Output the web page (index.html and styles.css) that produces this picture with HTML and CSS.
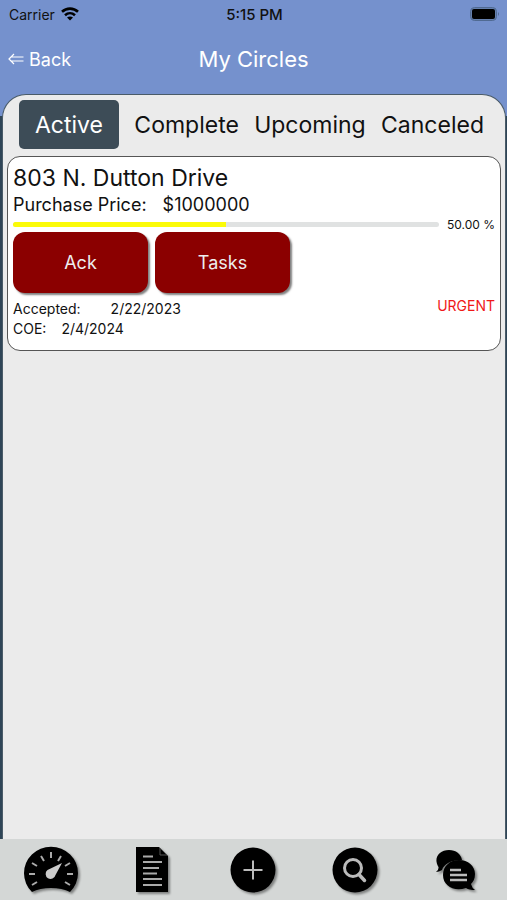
FILE: index.html
```html
<!DOCTYPE html>
<html lang="en">
<head>
    <meta charset="UTF-8">
    <meta name="viewport" content="width=device-width, initial-scale=1.0">
    <title>My Circles</title>
    <link rel="stylesheet" href="styles.css">
</head>
<body>
    <header>
        <div class="status">
            <div class="carrier">
                <span>Carrier</span>
                <svg width="18" height="14" viewBox="0 0 18 14" fill="none" stroke="#000" stroke-width="2.6">
                    <path d="M1 4.8C5.5 .6 12.5 .6 17 4.8"/>
                    <path d="M4 8.2c3-2.7 7-2.7 10 0"/>
                    <path d="M9 13.4L6 10.6c1.8-1.5 4.2-1.5 6 0z" fill="#000" stroke="none"/>
                </svg>
            </div>
            <strong>5:15 PM</strong>
            <div class="battery">
                <svg width="30" height="14" viewBox="0 0 30 14">
                    <rect x=".5" y=".5" width="26" height="13" rx="4" fill="#6580ae" stroke="#506a92"/>
                    <rect x="2" y="2" width="23" height="10" rx="2" fill="#000"/>
                    <path d="M28 5q2 2 0 4z" fill="#506a92"/>
                </svg>
            </div>
        </div>
        <nav class="titlebar">
            <a class="back" href="#">
                <svg width="16" height="12" viewBox="0 0 16 12" fill="none" stroke="#fff" stroke-width="1.2">
                    <path d="M6 1L1 6l5 5M3.500 4H15.500M3.500 8H15.500"/>
                </svg>
                Back
            </a>
            <h1>My Circles</h1>
        </nav>
    </header>

    <main>
        <div class="tabs">
            <button class="tab active">Active</button>
            <button class="tab">Complete</button>
            <button class="tab">Upcoming</button>
            <button class="tab">Canceled</button>
        </div>
        <section class="card">
            <h2>803 N. Dutton Drive</h2>
            <p class="price"><span>Purchase Price:</span><span>$1000000</span></p>
            <div class="progress">
                <div class="track"><div class="bar" style="width: 50%"></div></div>
                <span>50.00 %</span>
            </div>
            <div class="actions">
                <button class="action">Ack</button>
                <button class="action">Tasks</button>
            </div>
            <div class="details">
                <div>
                    <p class="accepted"><span>Accepted:</span><span>2/22/2023</span></p>
                    <p class="coe"><span>COE:</span><span>2/4/2024</span></p>
                </div>
                <span class="urgent">URGENT</span>
            </div>
        </section>
    </main>

    <footer>
        <a href="#" aria-label="Dashboard">
            <svg width="54" height="46" viewBox="0 0 54 46">
                <path d="M8 45A27 26.500 0 1 1 46 45C36 39.500 18 39.500 8 45z"/>
                <path d="M5 27h6M43 27h6M8 38l5-3M46 38l-5-3M8 16l5 3M46 16l-5 3M17 9l3 5M37 9l-3 5M27 5v6" stroke="#aaa" stroke-width="2"/>
                <path d="M38 16L31.500 28a5 5 0 1 1-8-5z" fill="#ccc"/>
            </svg>
        </a>
        <a href="#" aria-label="Documents">
            <svg width="34" height="46" viewBox="0 0 34 46">
                <path d="M1 0H24L33 9V45H1z"/>
                <path d="M25 1v7h7" fill="none" stroke="#555"/>
                <path d="M8 9.500h10M8 15h19M8 21h16M8 26.500h14M8 32h19M8 38h19" stroke="#aaa" stroke-width="2"/>
            </svg>
        </a>
        <a href="#" aria-label="Add">
            <svg width="46" height="46" viewBox="0 0 46 46">
                <circle cx="23" cy="23" r="22.500"/>
                <path d="M13.500 23h19M23 13.500v19" stroke="#bbb" stroke-width="2"/>
            </svg>
        </a>
        <a href="#" aria-label="Search">
            <svg width="46" height="46" viewBox="0 0 46 46">
                <circle cx="23" cy="23" r="22.500"/>
                <circle cx="21" cy="21" r="8.500" fill="none" stroke="#bbb" stroke-width="3"/>
                <path d="M27 27.500l5.500 6" stroke="#bbb" stroke-width="3.500" stroke-linecap="round"/>
            </svg>
        </a>
        <a href="#" aria-label="Messages">
            <svg width="42" height="42" viewBox="0 0 42 42">
                <path d="M1 23q3-2 2.500-5C-2 9 4 1 14 1c7 0 12 4 13 10C16 11 9 15 7 21q-3 2-6 2z"/>
                <path d="M24 11c9 0 16 6 16 14 0 5-2 8-4 10q1 4 4 6-6 0-9-2c-12 4-23-2-23-13 0-9 7-15 16-15z"/>
                <path d="M15 21h11M15 26h17M15 31h17" stroke="#bbb" stroke-width="2.500"/>
            </svg>
        </a>
    </footer>
</body>
</html>
```

FILE: styles.css
```css
* {
    box-sizing: border-box;
}
body {
    font-family: Inter, "Liberation Sans", sans-serif;
    background-color: #2f4557;
    color: #111;
    display: flex;
    flex-direction: column;
    min-height: 100vh;
    margin: 0;
}
h1, h2, p {
    font-weight: 400;
    margin: 0;
}
a {
    text-decoration: none;
}
button {
    font-family: inherit;
    border: none;
    cursor: pointer;
}
header {
    background-color: #7591cd;
    padding-bottom: 26px;
}
.status {
    display: grid;
    grid-template-columns: 1fr auto 1fr;
    align-items: center;
    height: 28px;
    padding: 0 7px 0 9px;
    font-size: 14px;
}
.status strong {
    font-size: 15px;
    font-weight: 500;
}
.carrier {
    display: flex;
    align-items: center;
    gap: 6px;
}
.battery {
    display: flex;
    justify-content: flex-end;
}
.titlebar {
    display: grid;
    grid-template-columns: 1fr auto 1fr;
    align-items: center;
    height: 62px;
    padding: 0 8px;
    color: #fff;
}
.back {
    display: flex;
    align-items: center;
    gap: 5px;
    color: #fff;
    font-size: 18px;
}
h1 {
    font-size: 22px;
}
main {
    flex: 1;
    margin: -22px 1px 0 2px;
    padding: 5px 4px;
    background-color: #ebebeb;
    border: 1px solid #4a5b68;
    border-bottom: none;
    border-radius: 24px 24px 0 0;
}
.tabs {
    display: flex;
    justify-content: space-between;
    padding: 0 17px 0 12px;
}
.tab {
    height: 49px;
    padding: 0;
    background: none;
    color: #111;
    font-size: 23px;
}
.tab.active {
    padding: 0 16px;
    background-color: #3d4c57;
    border-radius: 5px;
    color: #fff;
}
.card {
    margin-top: 7px;
    padding: 6px 5px 11px;
    background-color: #fff;
    border: 1px solid #555;
    border-radius: 13px;
}
h2 {
    font-size: 23px;
    line-height: 30px;
}
.price {
    display: flex;
    gap: 16px;
    font-size: 18px;
    line-height: 24px;
}
.progress {
    display: flex;
    align-items: center;
    gap: 8px;
    font-size: 12px;
    line-height: 15px;
}
.track {
    flex: 1;
    height: 5px;
    background-color: #e0e2e2;
    border-radius: 3px;
}
.bar {
    height: 5px;
    background-color: #fbfb08;
    border-radius: 3px 0 0 3px;
}
.actions {
    display: flex;
    gap: 7px;
}
.action {
    width: 135px;
    height: 61px;
    background-color: #8b0000;
    border-radius: 12px;
    box-shadow: 2px 2px 2px rgba(0, 0, 0, 0.5);
    color: #eee;
    font-size: 18px;
}
.details {
    display: flex;
    justify-content: space-between;
    margin-top: 6px;
    font-size: 14px;
    line-height: 20px;
}
.accepted {
    display: flex;
    gap: 30px;
}
.coe {
    display: flex;
    gap: 15px;
}
.urgent {
    color: #f01818;
    line-height: 14px;
}
footer {
    display: grid;
    grid-template-columns: repeat(5, 1fr);
    place-items: center;
    height: 61px;
    background-color: #d4d7d6;
}
footer svg {
    display: block;
    overflow: visible;
    filter: drop-shadow(2px 2px 1px rgba(0, 0, 0, 0.4));
}
```
